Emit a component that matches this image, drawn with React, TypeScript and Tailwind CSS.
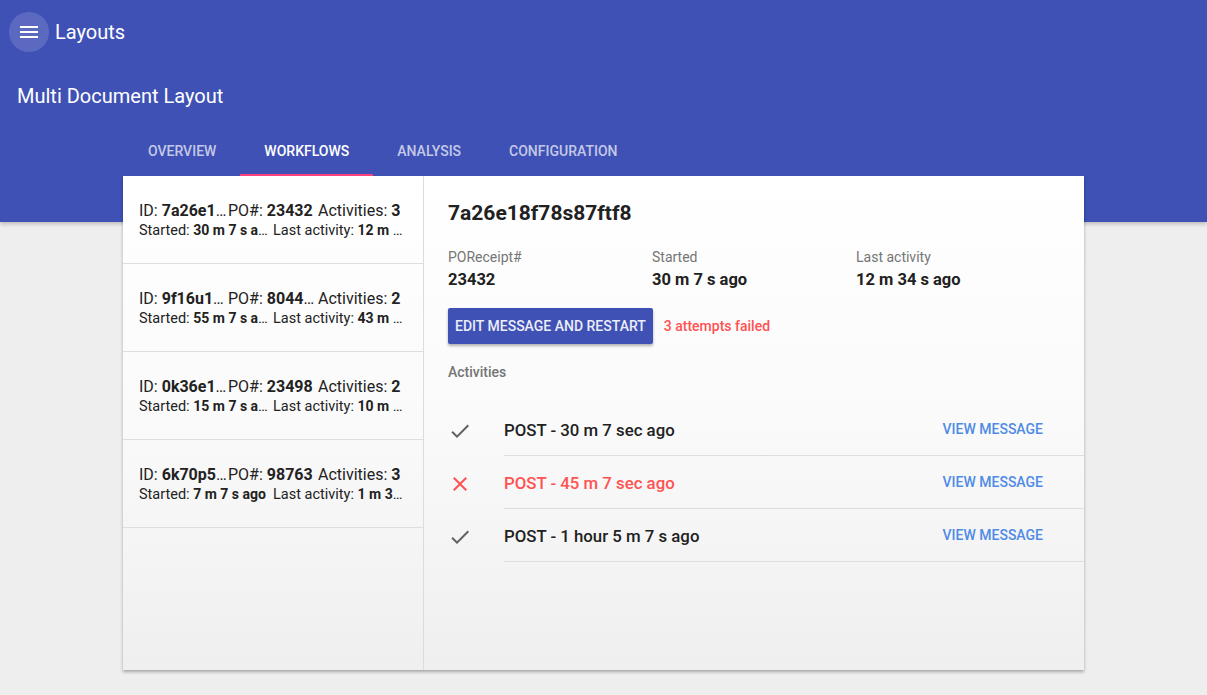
import React from "react";

const items = [
  { id: "7a26e18f78s87ftf8", po: "23432", acts: "3", started: "30 m 7 s ago", last: "12 m 34 s ago" },
  { id: "9f16u18f78s87ftf8", po: "8044612", acts: "2", started: "55 m 7 s ago", last: "43 m 34 s ago" },
  { id: "0k36e18f78s87ftf8", po: "23498", acts: "2", started: "15 m 7 s ago", last: "10 m 34 s ago" },
  { id: "6k70p58f78s87ftf8", po: "98763", acts: "3", started: "7 m 7 s ago", last: "1 m 34 s ago" },
];

const activities = [
  { text: "POST - 30 m 7 sec ago", ok: true },
  { text: "POST - 45 m 7 sec ago", ok: false },
  { text: "POST - 1 hour 5 m 7 s ago", ok: true },
];

function CheckIcon() {
  return (
    <svg width="24" height="24" viewBox="0 0 24 24" fill="#616161">
      <path d="M9 16.17L4.83 12l-1.42 1.41L9 19 21 7l-1.41-1.41z" />
    </svg>
  );
}

function CloseIcon() {
  return (
    <svg width="24" height="24" viewBox="0 0 24 24" fill="#ff5252">
      <path d="M19 6.41L17.59 5 12 10.59 6.41 5 5 6.41 10.59 12 5 17.59 6.41 19 12 13.41 17.59 19 19 17.59 13.41 12z" />
    </svg>
  );
}

function MenuIcon() {
  return (
    <svg width="24" height="24" viewBox="0 0 24 24" fill="#ffffff">
      <path d="M3 18h18v-2H3v2zm0-5h18v-2H3v2zm0-7v2h18V6H3z" />
    </svg>
  );
}

export default function App() {
  return (
    <div
      className="min-h-screen bg-[#eeeeee]"
      style={{ fontFamily: "Roboto, 'Noto Sans', Arial, sans-serif" }}
    >
      <header className="h-[222px] bg-[#3f51b5] shadow-[0_2px_4px_rgba(0,0,0,0.22)] relative z-0">
        <div className="h-16 flex items-center pl-[9px]">
          <div className="w-10 h-10 rounded-full bg-white/15 flex items-center justify-center">
            <MenuIcon />
          </div>
          <span className="ml-[6px] text-[20px] text-white">Layouts</span>
        </div>
        <div className="h-16 flex items-center pl-[17px]">
          <span className="text-[20px] text-white">Multi Document Layout</span>
        </div>
        <nav className="h-12 flex pl-[124px]">
          {["OVERVIEW", "WORKFLOWS", "ANALYSIS", "CONFIGURATION"].map((t) => {
            const active = t === "WORKFLOWS";
            return (
              <div
                key={t}
                className={
                  "px-6 flex items-center justify-center text-[14px] font-medium border-b-2 " +
                  (active ? "text-white border-[#ff4081]" : "text-white/70 border-transparent")
                }
              >
                {t}
              </div>
            );
          })}
        </nav>
      </header>

      <div className="relative z-10 mt-[-46px] mx-[123px] h-[494px] flex bg-gradient-to-b from-[#ffffff] via-[#fafafa] to-[#efefef] shadow-[0_2px_3px_rgba(0,0,0,0.3)]">
        <div className="w-[301px] border-r border-[#dcdcdc] shrink-0">
          {items.map((it) => (
            <div
              key={it.id}
              className="h-[88px] border-b border-[#dedede] px-4 pt-[2px] flex flex-col justify-center text-[#222]"
            >
              <div className="flex text-[16px] leading-[20px] whitespace-nowrap">
                <span className="w-[89px] overflow-hidden text-ellipsis">
                  ID: <b className="font-bold">{it.id}</b>
                </span>
                <span className="w-[90px] overflow-hidden text-ellipsis">
                  PO#: <b className="font-bold">{it.po}</b>
                </span>
                <span className="w-[89px] overflow-hidden text-ellipsis">
                  Activities: <b className="font-bold">{it.acts}</b>
                </span>
              </div>
              <div className="flex text-[14.5px] leading-[18px] whitespace-nowrap">
                <span className="w-[134px] pr-[4px] overflow-hidden text-ellipsis">
                  Started: <b className="font-bold text-[14px]">{it.started}</b>
                </span>
                <span className="w-[131px] overflow-hidden text-ellipsis">
                  Last activity: <b className="font-bold text-[14px]">{it.last}</b>
                </span>
              </div>
            </div>
          ))}
        </div>

        <div className="flex-1 pl-6 pt-[23px]">
          <div className="pr-6">
            <h2 className="text-[21px] leading-[28px] font-bold text-[#212121]">7a26e18f78s87ftf8</h2>
            <div className="grid grid-cols-3 mt-[21px]">
              {[
                ["POReceipt#", "23432"],
                ["Started", "30 m 7 s ago"],
                ["Last activity", "12 m 34 s ago"],
              ].map(([l, v]) => (
                <div key={l}>
                  <div className="text-[14px] leading-[18px] text-[#757575]">{l}</div>
                  <div className="text-[16.5px] leading-[22px] font-bold text-[#212121] mt-[3px]">{v}</div>
                </div>
              ))}
            </div>
            <div className="flex items-center mt-[17px]">
              <button className="h-9 px-[7px] rounded-[2px] bg-[#3f51b5] text-[14px] font-medium text-white/90 shadow-[0_2px_3px_rgba(0,0,0,0.3)]">
                EDIT MESSAGE AND RESTART
              </button>
              <span className="ml-[11px] text-[14px] font-medium text-[#ff5252]">3 attempts failed</span>
            </div>
            <div className="mt-[19px] text-[14px] leading-[18px] font-medium text-[#757575]">Activities</div>
          </div>

          <div className="mt-[22px]">
            {activities.map((a) => (
              <div key={a.text} className="flex h-[53px]">
                <div className="w-6 flex items-center justify-center pt-[2px]">
                  {a.ok ? <CheckIcon /> : <CloseIcon />}
                </div>
                <div className="ml-8 flex-1 flex items-center justify-between border-b border-[#dedede]">
                  <span
                    className={
                      "mt-[3px] text-[16.8px] font-medium " + (a.ok ? "text-[#212121]" : "text-[#ff5252]")
                    }
                  >
                    {a.text}
                  </span>
                  <span className="mr-[25px] px-4 text-[14px] font-medium text-[#4f8be6]">
                    VIEW MESSAGE
                  </span>
                </div>
              </div>
            ))}
          </div>
        </div>
      </div>
    </div>
  );
}
